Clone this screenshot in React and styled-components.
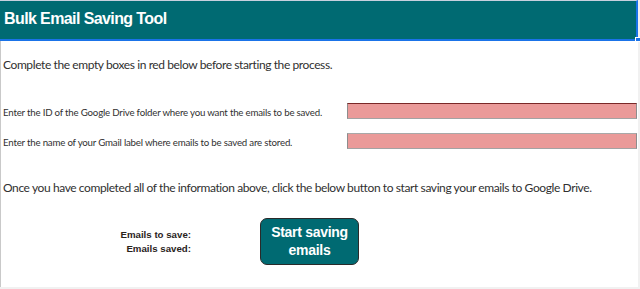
import React from 'react';
import styled, { createGlobalStyle } from 'styled-components';

const GlobalStyle = createGlobalStyle`
  html, body {
    margin: 0;
    padding: 0;
    background: #f1f1f1;
  }
  * { box-sizing: border-box; }
`;

const Sheet = styled.div`
  position: relative;
  width: 638px;
  height: 287px;
  background: #ffffff;
  border-left: 1px solid #c9c9c9;
  display: flex;
  flex-direction: column;
`;

const Header = styled.div`
  height: 41px;
  margin-left: -1px;
  background: #006a72;
  border-top: 1px solid #c7d0de;
  border-bottom: 2px solid #1a73e8;
  border-right: 2px solid #1a73e8;
  display: flex;
  align-items: center;
  padding-left: 4px;
`;

const Title = styled.h1`
  margin: 0;
  font-family: "Liberation Sans", Arial, sans-serif;
  font-weight: 700;
  font-size: 16px;
  letter-spacing: -0.6px;
  color: #ffffff;
  padding-bottom: 2px;
`;

const Handle = styled.span`
  position: absolute;
  left: 634px;
  top: 37px;
  width: 6px;
  height: 5px;
  background: #1a73e8;
  border: 1px solid #ffffff;
`;

const Body = styled.div`
  padding-left: 2px;
  display: flex;
  flex-direction: column;
`;

const Note = styled.p`
  margin: ${p => p.$top}px 0 0;
  font-family: Lato, "Open Sans", sans-serif;
  font-size: 12px;
  line-height: 15px;
  letter-spacing: -0.4px;
  color: #303030;
`;

const Fields = styled.div`
  margin-top: 31px;
  display: flex;
  flex-direction: column;
  gap: 14px;
`;

const FieldRow = styled.div`
  display: grid;
  grid-template-columns: 344px 1fr;
  align-items: center;
  height: 16px;
`;

const FieldLabel = styled.span`
  font-family: Lato, "Open Sans", sans-serif;
  font-size: 9.7px;
  letter-spacing: -0.2px;
  color: #303030;
  padding-top: 1px;
`;

const RedBox = styled.div`
  height: 16px;
  margin-right: 1px;
  background: #ea9a99;
  border: 1px solid #8d8d8d;
  border-top-color: ${p => p.$topColor};
  border-bottom-color: #a3a3a3;
`;

const Action = styled.div`
  margin-top: 23px;
  display: flex;
  align-items: center;
`;

const Counters = styled.div`
  width: 188px;
  text-align: right;
  font-family: "Liberation Sans", Arial, sans-serif;
  font-weight: 700;
  font-size: 9.7px;
  line-height: 14px;
  color: #2a231c;
  padding-top: 1px;
`;

const StartButton = styled.button`
  margin-left: 69px;
  width: 99px;
  height: 47px;
  padding: 0 0 1px;
  background: #006a72;
  border: 1px solid #2a2a2a;
  border-radius: 7px;
  color: #ffffff;
  font-family: "Liberation Sans", Arial, sans-serif;
  font-weight: 700;
  font-size: 14px;
  line-height: 18px;
  letter-spacing: -0.3px;
  cursor: pointer;
`;

export default function App() {
  return (
    <>
      <GlobalStyle />
      <Sheet>
        <Header>
          <Title>Bulk Email Saving Tool</Title>
        </Header>
        <Handle />
        <Body>
          <Note $top={16}>Complete the empty boxes in red below before starting the process.</Note>
          <Fields>
            <FieldRow>
              <FieldLabel>Enter the ID of the Google Drive folder where you want the emails to be saved.</FieldLabel>
              <RedBox $topColor="#7a2828" />
            </FieldRow>
            <FieldRow>
              <FieldLabel>Enter the name of your Gmail label where emails to be saved are stored.</FieldLabel>
              <RedBox $topColor="#a8a8a8" />
            </FieldRow>
          </Fields>
          <Note $top={31}>Once you have completed all of the information above, click the below button to start saving your emails to Google Drive.</Note>
          <Action>
            <Counters>
              Emails to save:<br />
              Emails saved:
            </Counters>
            <StartButton>Start saving<br />emails</StartButton>
          </Action>
        </Body>
      </Sheet>
    </>
  );
}
